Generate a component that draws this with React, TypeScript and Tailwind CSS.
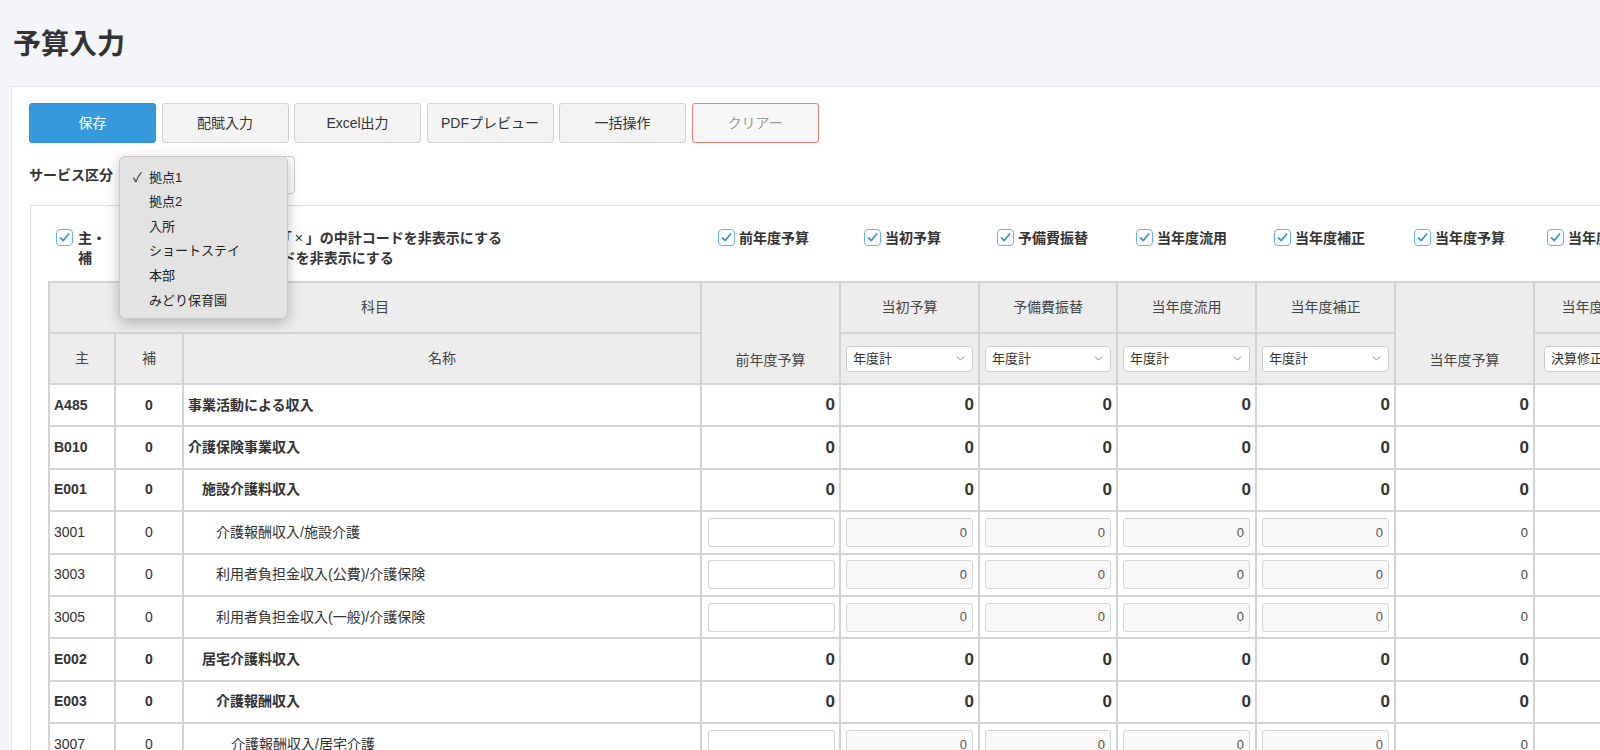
import { ChevronDown } from 'lucide-react';

const buttons = [
  { label: '保存', kind: 'primary' },
  { label: '配賦入力', kind: 'default' },
  { label: 'Excel出力', kind: 'default' },
  { label: 'PDFプレビュー', kind: 'default' },
  { label: '一括操作', kind: 'default' },
  { label: 'クリアー', kind: 'danger' },
];

const columnToggles = [
  { label: '前年度予算', w: 'w-[146px]' },
  { label: '当初予算', w: 'w-[133px]' },
  { label: '予備費振替', w: 'w-[139px]' },
  { label: '当年度流用', w: 'w-[138px]' },
  { label: '当年度補正', w: 'w-[140px]' },
  { label: '当年度予算', w: 'w-[133px]' },
  { label: '当年度修正額', w: 'w-[140px]' },
];

const services = ['拠点1', '拠点2', '入所', 'ショートステイ', '本部', 'みどり保育園'];

const rows = [
  { code: 'A485', sub: '0', name: '事業活動による収入', indent: 0, total: true },
  { code: 'B010', sub: '0', name: '介護保険事業収入', indent: 0, total: true },
  { code: 'E001', sub: '0', name: '施設介護料収入', indent: 1, total: true },
  { code: '3001', sub: '0', name: '介護報酬収入/施設介護', indent: 2, total: false },
  { code: '3003', sub: '0', name: '利用者負担金収入(公費)/介護保険', indent: 2, total: false },
  { code: '3005', sub: '0', name: '利用者負担金収入(一般)/介護保険', indent: 2, total: false },
  { code: 'E002', sub: '0', name: '居宅介護料収入', indent: 1, total: true },
  { code: 'E003', sub: '0', name: '介護報酬収入', indent: 2, total: true },
  { code: '3007', sub: '0', name: '介護報酬収入/居宅介護', indent: 3, total: false },
  { code: '3009', sub: '0', name: '介護報酬収入/介護予防', indent: 3, total: false },
];

const indentClass = ['pl-[4px]', 'pl-[18px]', 'pl-[32px]', 'pl-[47px]'];

function Check() {
  return (
    <span className="flex h-[17px] w-[17px] flex-shrink-0 items-center justify-center rounded-[4px] border-[1.5px] border-[#62b4ea] bg-white">
      <svg width="13" height="13" viewBox="0 0 13 13" fill="none">
        <path d="M2.5 6.8 L5.2 9.6 L10.6 3" stroke="#3596dc" strokeWidth="1.7" strokeLinecap="round" strokeLinejoin="round" />
      </svg>
    </span>
  );
}

function HeadSelect({ label }: { label: string }) {
  return (
    <div className="flex h-[26px] w-full items-center justify-between rounded-[4px] border border-[#cccccc] bg-white pl-[6px] pr-[5px] text-[13px] text-[#333]">
      <span className="whitespace-nowrap">{label}</span>
      <ChevronDown size={13} strokeWidth={1.4} className="text-[#666]" />
    </div>
  );
}

function Cell({ children, className = '' }: { children?: React.ReactNode; className?: string }) {
  return <td className={`border-2 border-[#d3d3d3] ${className}`}>{children}</td>;
}

function Th({ children, className = '', colSpan, rowSpan }: { children?: React.ReactNode; className?: string; colSpan?: number; rowSpan?: number }) {
  return (
    <th colSpan={colSpan} rowSpan={rowSpan} className={`border-2 border-[#d3d3d3] bg-[#ededed] font-normal text-[14px] text-[#444] ${className}`}>
      {children}
    </th>
  );
}

export default function App() {
  return (
    <div className="relative h-[750px] w-[1600px] overflow-hidden bg-[#f4f5f8] font-['Liberation_Sans','Noto_Sans_CJK_JP',sans-serif] text-[#333]">
      {/* Title */}
      <h1 className="pl-[13px] pt-[25px] text-[28px] font-bold leading-[40px] text-[#333]">予算入力</h1>

      {/* Card */}
      <div className="ml-[11px] mt-[21px] w-[1700px] border border-[#e3e3e3] bg-white pb-10">
        <div className="flex gap-[5.5px] pl-[17px] pt-[16px]">
          {buttons.map((b) => (
            <button
              key={b.label}
              className={`h-[40px] w-[127px] rounded-[3px] border text-[14px] ${
                b.kind === 'primary'
                  ? 'border-[#2f8fd2] bg-[#3599dc] text-white'
                  : b.kind === 'danger'
                  ? 'border-[#ee7c75] bg-[#f7f7f7] text-[#999]'
                  : 'border-[#d2d2d2] bg-[#f3f3f3] text-[#333]'
              }`}
            >
              {b.label}
            </button>
          ))}
        </div>

        {/* Service select */}
        <div className="mt-[13px] flex items-center pl-[17px]">
          <span className="text-[14px] font-bold">サービス区分</span>
          <div className="ml-[16px] flex h-[38px] w-[166px] items-center justify-end rounded-[4px] border border-[#cfcfcf] bg-white pr-[6px]">
            <ChevronDown size={13} strokeWidth={1.4} className="text-[#666]" />
          </div>
        </div>

        {/* Panel */}
        <div className="ml-[18px] mt-[11px] border border-[#dcdcdc] pb-10">
          <div className="flex items-start pt-[22px] text-[14px] font-bold leading-[20px]">
            <div className="ml-[25px] flex gap-[5px]">
              <span className="mt-[1px]"><Check /></span>
              <span className="w-[32px]">主・補</span>
            </div>
            <div className="ml-[12px] flex w-[596px] gap-[5px]">
              <span className="mt-[1px]"><Check /></span>
              <span className="whitespace-nowrap">
                金額0の科目で名称が「<span className="inline-block w-[14px] text-center font-normal">×</span>」の中計コードを非表示にする
                <br />
                金額 0の中計科目コードを非表示にする
              </span>
            </div>
            {columnToggles.map((c) => (
              <div key={c.label} className={`flex flex-shrink-0 gap-[4px] ${c.w}`}>
                <span className="mt-[1px]"><Check /></span>
                <span className="whitespace-nowrap">{c.label}</span>
              </div>
            ))}
          </div>

          {/* Table */}
          <div className="ml-[17px] mt-[13px]">
            <table className="w-[1624px] table-fixed border-collapse">
              <colgroup>
                <col className="w-[66px]" />
                <col className="w-[68px]" />
                <col className="w-[518px]" />
                <col className="w-[139px]" />
                <col className="w-[139px]" />
                <col className="w-[138px]" />
                <col className="w-[139px]" />
                <col className="w-[139px]" />
                <col className="w-[139px]" />
                <col className="w-[139px]" />
              </colgroup>
              <thead>
                <tr className="h-[51px]">
                  <Th colSpan={3}>科目</Th>
                  <Th rowSpan={2} className="pb-[12px] align-bottom">前年度予算</Th>
                  <Th>当初予算</Th>
                  <Th>予備費振替</Th>
                  <Th>当年度流用</Th>
                  <Th>当年度補正</Th>
                  <Th rowSpan={2} className="pb-[12px] align-bottom">当年度予算</Th>
                  <Th>当年度修正額</Th>
                </tr>
                <tr className="h-[51px]">
                  <Th>主</Th>
                  <Th>補</Th>
                  <Th>名称</Th>
                  <Th className="px-[5px]"><HeadSelect label="年度計" /></Th>
                  <Th className="px-[5px]"><HeadSelect label="年度計" /></Th>
                  <Th className="px-[5px]"><HeadSelect label="年度計" /></Th>
                  <Th className="px-[5px]"><HeadSelect label="年度計" /></Th>
                  <Th className="px-[9px]"><HeadSelect label="決算修正後" /></Th>
                </tr>
              </thead>
              <tbody>
                {rows.map((r) => (
                  <tr key={r.code} className="h-[42.4px] bg-white">
                    <Cell className={`pl-[4px] text-[14px] ${r.total ? 'font-bold' : ''}`}>{r.code}</Cell>
                    <Cell className={`text-center text-[14px] ${r.total ? 'font-bold' : ''}`}>{r.sub}</Cell>
                    <Cell className={`${indentClass[r.indent]} text-[14px] ${r.total ? 'font-bold' : ''}`}>{r.name}</Cell>
                    {r.total ? (
                      <>
                        {[0, 1, 2, 3, 4, 5].map((i) => (
                          <Cell key={i} className="pr-[4px] text-right text-[17px] font-bold">0</Cell>
                        ))}
                        <Cell />
                      </>
                    ) : (
                      <>
                        <Cell className="pl-[6px] pr-[4px]">
                          <div className="h-[29px] w-full rounded-[3px] border border-[#d0d0d0] bg-white" />
                        </Cell>
                        {[0, 1, 2, 3].map((i) => (
                          <Cell key={i} className="px-[5px]">
                            <div className="flex h-[29px] w-full items-center justify-end rounded-[3px] border border-[#d5d5d5] bg-[#f8f8f8] pr-[5px] text-[13px] text-[#555]">
                              0
                            </div>
                          </Cell>
                        ))}
                        <Cell className="pr-[5px] text-right text-[13px] text-[#444]">0</Cell>
                        <Cell />
                      </>
                    )}
                  </tr>
                ))}
              </tbody>
            </table>
          </div>
        </div>
      </div>

      {/* Open dropdown menu */}
      <div className="absolute left-[119px] top-[156px] w-[169px] rounded-[6px] border border-[#c9c9c9] bg-[#e3e3e3] pb-[5px] pt-[8px] shadow-[0_4px_14px_rgba(0,0,0,0.25)]">
        {services.map((s, i) => (
          <div key={s} className="relative flex h-[24.6px] items-center pl-[29px] text-[13px] text-[#222]">
            {i === 0 && <span className="absolute left-[13px] text-[13px]">✓</span>}
            {s}
          </div>
        ))}
      </div>
    </div>
  );
}
